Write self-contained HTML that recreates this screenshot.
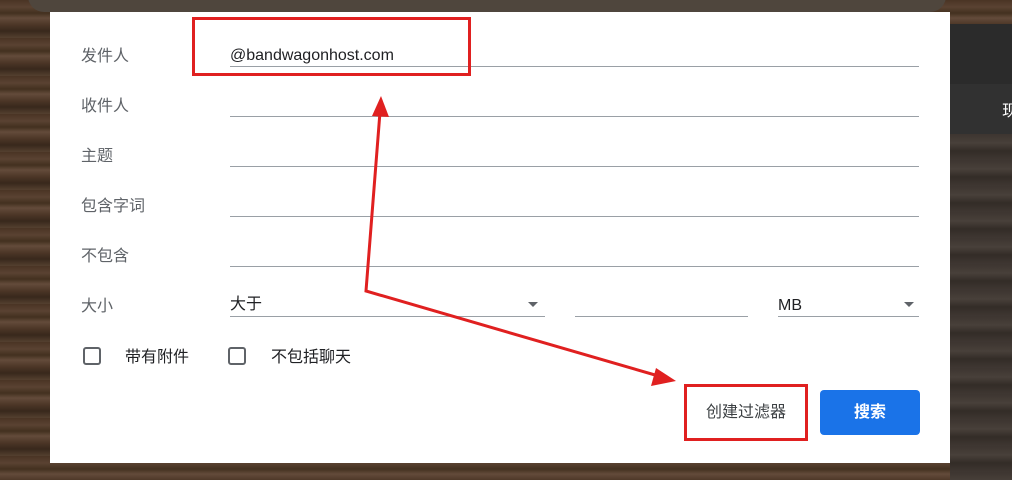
<!DOCTYPE html>
<html><head><meta charset="utf-8"><style>
*{margin:0;padding:0;box-sizing:border-box}
body{width:1012px;height:480px;overflow:hidden;position:relative;background:repeating-linear-gradient(180deg,#4a3424 0px,#5a4232 7px,#43301f 13px,#634b3a 18px,#4b3526 25px,#38281c 31px,#54402f 38px);font-family:"Liberation Sans","Noto Sans CJK SC",sans-serif}
.rb{position:absolute;left:950px;top:134px;width:62px;height:346px;background:repeating-linear-gradient(180deg,#3d3530 0,#48403a 9px,#332c27 17px,#3f3732 26px)}
.topbox{position:absolute;left:28px;top:-20px;width:918px;height:32px;border-radius:16px;background:#4f463d}
.rp1{position:absolute;left:950px;top:24px;width:62px;height:60px;background:#2b2b2b}
.rp2{position:absolute;left:950px;top:84px;width:62px;height:50px;background:#313131;color:#fff;font-size:16px;line-height:1;padding:20px 0 0 52px}
.dlg{position:absolute;left:50px;top:12px;width:900px;height:451px;background:#fff}
.lab{position:absolute;left:81px;font-size:16px;line-height:1;color:#5f6368}
.ln{position:absolute;height:1px;background:#9aa0a6}
.val{position:absolute;font-size:16px;line-height:1;color:#202124}
.cb{position:absolute;top:347px;width:18px;height:18px;border:2px solid #5f6368;border-radius:3px}
.cbl{position:absolute;top:350px;font-size:16px;line-height:1;color:#202124}
.tri{position:absolute;width:0;height:0;border-left:5px solid transparent;border-right:5px solid transparent;border-top:5px solid #5f6368;top:302px}
.btn2{position:absolute;left:820px;top:390px;width:100px;height:45px;background:#1a73e8;border-radius:4px;color:#fff;font-size:16px;font-weight:bold;text-align:center;line-height:45px}
.btn1{position:absolute;left:684px;top:384px;width:124px;height:57px;border:3px solid #e02020;font-size:16px;color:#3c4043;text-align:center;line-height:51px}
</style></head><body>
<div class="rb"></div>
<div class="topbox"></div>
<div class="rp1"></div><div class="rp2">现</div>
<div class="dlg"></div>
<div class="lab" style="top:49px">发件人</div>
<div class="lab" style="top:99px">收件人</div>
<div class="lab" style="top:149px">主题</div>
<div class="lab" style="top:199px">包含字词</div>
<div class="lab" style="top:249px">不包含</div>
<div class="lab" style="top:299px">大小</div>
<div class="val" style="left:230px;top:48px">@bandwagonhost.com</div>
<div class="ln" style="left:230px;width:689px;top:66px"></div>
<div class="ln" style="left:230px;width:689px;top:116px"></div>
<div class="ln" style="left:230px;width:689px;top:166px"></div>
<div class="ln" style="left:230px;width:689px;top:216px"></div>
<div class="ln" style="left:230px;width:689px;top:266px"></div>
<div class="val" style="left:230px;top:297px">大于</div>
<div class="tri" style="left:528px"></div>
<div class="ln" style="left:230px;width:315px;top:316px"></div>
<div class="ln" style="left:575px;width:173px;top:316px"></div>
<div class="val" style="left:778px;top:298px">MB</div>
<div class="tri" style="left:904px"></div>
<div class="ln" style="left:778px;width:141px;top:316px"></div>
<div class="cb" style="left:83px"></div><div class="cbl" style="left:125px">带有附件</div>
<div class="cb" style="left:228px"></div><div class="cbl" style="left:271px">不包括聊天</div>
<div class="btn1">创建过滤器</div>
<div class="btn2">搜索</div>
<div style="position:absolute;left:192px;top:17px;width:279px;height:59px;border:3px solid #e02020"></div>
<svg style="position:absolute;left:0;top:0" width="1012" height="480">
<polyline points="380,112 366,291 662,377" fill="none" stroke="#e02020" stroke-width="3"/>
<polygon points="381,96 372,116 389,117" fill="#e02020"/>
<polygon points="676,381 656,368 651,386" fill="#e02020"/>
</svg>
</body></html>
